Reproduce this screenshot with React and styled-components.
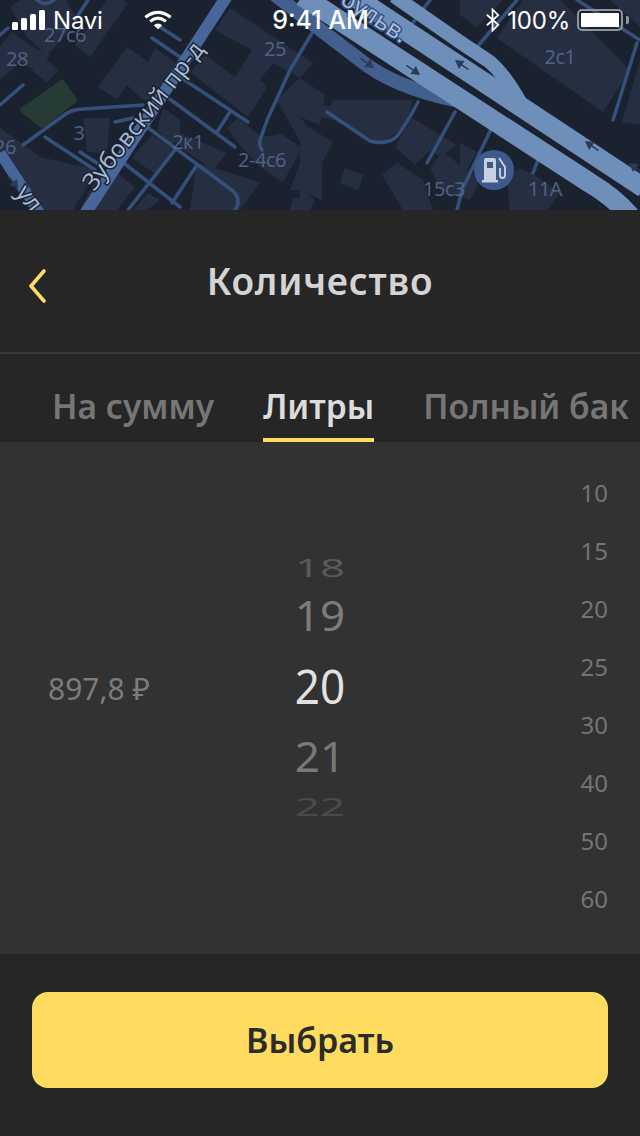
import React from "react";
import styled, { createGlobalStyle } from "styled-components";

const GlobalStyle = createGlobalStyle`
  html, body {
    margin: 0;
    padding: 0;
    background: #262626;
    font-family: "Noto Sans", "Open Sans", sans-serif;
  }
  * { box-sizing: border-box; }
`;

const buildings = [
  "10,7 20,0 66,0 75,15 66,35 47,55 27,37",
  "75,45 90,57 128,3 123,0 107,0",
  "0,47 12,32 33,47 50,55 35,70 20,62 0,80",
  "32,70 45,58 58,70 47,83",
  "98,87 127,47 148,62 155,48 185,70 167,95 143,100 127,85 117,99",
  "230,8 313,63 300,78 273,63 260,80 267,87 248,117 190,72 205,55 235,77 252,50 215,30",
  "227,128 238,118 262,137 277,135 280,133 302,148 283,182 260,167 240,145",
  "277,100 300,78 325,95 320,125 300,117 322,145 322,200 300,190 290,190 305,150",
  "180,133 227,153 213,170 180,147",
  "197,163 260,182 240,210 190,210",
  "313,115 320,103 330,107 333,100 413,100 407,120 397,133 380,143 333,120",
  "300,122 333,142 317,173 300,163",
  "300,187 315,200 310,210 300,210",
  "345,168 363,175 358,190 340,183",
  "395,147 412,118 457,145 440,157 430,150 415,165",
  "382,175 397,163 423,180 433,210 403,210",
  "430,167 443,152 480,180 470,200 440,190",
  "460,143 477,152 465,173 460,170",
  "507,180 518,168 532,173 560,193 547,210 510,210",
  "497,38 523,0 560,0 630,70 603,112",
  "610,0 640,27 640,0",
  "640,60 640,125 622,122",
  "460,0 503,0 477,27 460,15",
  "83,118 110,118 107,153 87,152",
  "0,128 40,157 97,170 73,210 40,210 0,157",
  "132,158 152,135 175,150 157,175",
  "100,170 117,173 135,187 117,210 80,210",
  "133,210 148,193 160,200 147,210",
  "157,130 163,108 180,120 180,143 170,143",
  "293,197 313,200 307,210 290,210"
];

const minorRoads = [
  "M152 38 L180 57",
  "M160 27 L180 40",
  "M180 77 L248 122",
  "M167 97 L235 147",
  "M230 112 L217 132",
  "M147 127 L233 191 Q242 200 235 210",
  "M45 137 L95 170",
  "M80 152 L100 165",
  "M120 160 L180 207",
  "M175 150 L128 210",
  "M197 165 L172 203",
  "M23 145 L67 113 Q75 109 83 109 L143 105",
  "M115 122 L133 118",
  "M0 105 L23 85",
  "M0 35 L8 28",
  "M36 -1 Q45 8 55 -1",
  "M75 20 L88 0",
  "M312 33 L290 70 L268 118 L260 140 Q259 146 262 150",
  "M430 0 L410 27",
  "M517 0 L477 47",
  "M577 0 L640 40",
  "M637 43 L613 120",
  "M327 112 L370 141 Q385 145 395 138 Q402 132 418 102",
  "M427 163 L455 112",
  "M457 210 L462 190 L492 127",
  "M533 173 L540 155"
];

const arrows = [
  [367, 63, 35],
  [413, 70, 35],
  [462, 65, 215],
  [592, 146, 215],
  [636, 168, 215],
  [13, 182, 50]
];

const labels = [
  ["27с6", 65, 42],
  ["28", 17, 66],
  ["26", 5, 154],
  ["3", 79, 140],
  ["2к1", 188, 149],
  ["2-4с6", 262, 167],
  ["25", 275, 56],
  ["2с1", 560, 64],
  ["15с3", 444, 196],
  ["11А", 545, 196]
];

function MapDrawing() {
  return (
    <MapSvg viewBox="0 0 640 210">
      <rect width="640" height="210" fill="#1b222f" />
      {buildings.map((p) => (
        <polygon key={p} points={p} fill="#262f42" />
      ))}
      <path d="M62 83 L74 100 L42 125 L23 110 Z" fill="#263a36" stroke="#263a36" strokeWidth="6" strokeLinejoin="round" />
      <g fill="none" stroke="#36507c" strokeWidth="3.5" strokeLinecap="round" strokeLinejoin="round">
        {minorRoads.map((d) => (
          <path key={d} d={d} />
        ))}
      </g>
      <path d="M227 -4 L85 214" stroke="#476699" strokeWidth="12" fill="none" />
      <path d="M0 153 L40 214" stroke="#476699" strokeWidth="11" fill="none" />
      <path d="M275 -5 L368 66 Q405 92 475 104" stroke="#425f8f" strokeWidth="14" fill="none" />
      <g fill="none" stroke="#6f8fbb" strokeLinejoin="round">
        <path d="M302 -4 L590 183 Q615 198 630 216" strokeWidth="20" />
        <path d="M353 -4 L644 188" strokeWidth="20" />
        <path d="M394 -4 L460 42 L490 62 Q505 75 520 102" strokeWidth="14" />
      </g>
      {arrows.map(([x, y, a]) => (
        <g key={x} transform={`translate(${x} ${y}) rotate(${a})`} fill="none" stroke="#2b3b58" strokeWidth="1.6">
          <path d="M-8 0 H6" />
          <path d="M1 -3.5 L7 0 L1 3.5 Z" fill="#2b3b58" />
        </g>
      ))}
      {labels.map(([t, x, y]) => (
        <MapLabel key={t} x={x} y={y} textAnchor="middle">
          {t}
        </MapLabel>
      ))}
      <StreetLabel transform="translate(94 192) rotate(-52)">Зубовский пр-д</StreetLabel>
      <StreetLabel transform="translate(15 193) rotate(52)">ул</StreetLabel>
      <StreetLabel $halo="#34507f" transform="translate(339 3) rotate(33)">бульв.</StreetLabel>
      <circle cx="494" cy="170" r="20" fill="#3e5a8c" />
      <path d="M484 160 Q484 158 486 158 H494 Q496 158 496 160 V180 H498 V182.5 H482 V180 H484 Z M487 162 V168 H493 V162 Z" fill="#c7cfe0" fillRule="evenodd" />
      <path d="M499 158 L505 167 V175 Q505 178 502.5 178 Q500 178 500 175 V168" fill="none" stroke="#c7cfe0" strokeWidth="1.9" />
    </MapSvg>
  );
}

function SignalIcon() {
  return (
    <svg width="34" height="20" viewBox="0 0 34 20" fill="#fff">
      <rect x="0" y="12" width="6" height="8" rx="1.5" />
      <rect x="9" y="8" width="6" height="12" rx="1.5" />
      <rect x="18" y="4" width="6" height="16" rx="1.5" />
      <rect x="27" y="0" width="6" height="20" rx="1.5" />
    </svg>
  );
}

function WifiIcon() {
  return (
    <svg width="28" height="20" viewBox="0 0 30 21" fill="none" stroke="#fff" strokeWidth="3.4">
      <path d="M1.5 7.5 Q15 -3 28.5 7.5" />
      <path d="M6.5 12 Q15 5 23.5 12" />
      <path d="M15 20.5 L10.5 16 Q15 12.5 19.5 16 Z" fill="#fff" stroke="none" />
    </svg>
  );
}

function BluetoothIcon() {
  return (
    <svg width="14" height="24" viewBox="0 0 16 26" fill="none" stroke="#fff" strokeWidth="2">
      <path d="M1 7 L14 18.5 L7.5 25 V1 L14 7.5 L1 19" />
    </svg>
  );
}

function Chevron() {
  return (
    <svg width="20" height="34" viewBox="0 0 20 34" fill="none" stroke="#ffdb60" strokeWidth="3.6" strokeLinecap="round" strokeLinejoin="round">
      <path d="M16 2 L3 17 L16 32" />
    </svg>
  );
}

const wheelRows = [
  { value: 18, height: 26, scale: 0.56, color: "#5a5a5a" },
  { value: 19, height: 70, scale: 0.95, color: "#7c7c7c" },
  { value: 20, height: 72, scale: 1.08, color: "#e2e2e2" },
  { value: 21, height: 68, scale: 0.95, color: "#797979" },
  { value: 22, height: 32, scale: 0.56, color: "#4a4a4a" }
];

const presets = [10, 15, 20, 25, 30, 40, 50, 60];

export default function App() {
  return (
    <Screen>
      <GlobalStyle />
      <MapArea>
        <MapDrawing />
        <StatusBar>
          <StatusGroup>
            <SignalIcon />
            <StatusText>Navi</StatusText>
            <WifiSlot>
              <WifiIcon />
            </WifiSlot>
          </StatusGroup>
          <StatusTime>9:41 AM</StatusTime>
          <StatusRight>
            <BluetoothIcon />
            <StatusText>100%</StatusText>
            <Battery>
              <BatteryFill />
            </Battery>
            <BatteryNub />
          </StatusRight>
        </StatusBar>
      </MapArea>
      <Header>
        <BackButton>
          <Chevron />
        </BackButton>
        <Title>Количество</Title>
      </Header>
      <Tabs>
        <Tab>На сумму</Tab>
        <Tab $active>Литры</Tab>
        <Tab>Полный бак</Tab>
      </Tabs>
      <Picker>
        <Price>897,8 ₽</Price>
        <Wheel>
          {wheelRows.map((row) => (
            <WheelRow key={row.value} $height={row.height}>
              <WheelValue $scale={row.scale} $color={row.color}>
                {row.value}
              </WheelValue>
            </WheelRow>
          ))}
        </Wheel>
        <Presets>
          {presets.map((p) => (
            <Preset key={p}>{p}</Preset>
          ))}
        </Presets>
      </Picker>
      <Footer>
        <SelectButton>Выбрать</SelectButton>
      </Footer>
    </Screen>
  );
}

const Screen = styled.div`
  width: 640px;
  height: 1136px;
  overflow: hidden;
  background: #262626;
  display: flex;
  flex-direction: column;
`;

const MapArea = styled.div`
  position: relative;
  height: 210px;
  flex: none;
  overflow: hidden;
`;

const MapSvg = styled.svg`
  display: block;
  width: 640px;
  height: 210px;
`;

const MapLabel = styled.text`
  font-family: "Open Sans", sans-serif;
  font-size: 20px;
  letter-spacing: -0.5px;
  fill: #4f6488;
`;

const StreetLabel = styled.text`
  font-family: "Open Sans", sans-serif;
  font-size: 24px;
  fill: #a9bedb;
  stroke: ${(p) => p.$halo || "#1b222f"};
  stroke-width: 3px;
  paint-order: stroke;
`;

const StatusBar = styled.div`
  position: absolute;
  top: 0;
  left: 0;
  right: 0;
  height: 40px;
  padding: 0 11px 0 12px;
  display: grid;
  grid-template-columns: 1fr auto 1fr;
  align-items: center;
  color: #fff;
`;

const StatusGroup = styled.div`
  display: flex;
  align-items: center;
  gap: 7px;
`;

const WifiSlot = styled.div`
  display: flex;
  margin-left: 34px;
`;

const StatusText = styled.span`
  font-family: "Inter", "Roboto", sans-serif;
  font-size: 24px;
  font-weight: 400;
  letter-spacing: -0.2px;
`;

const StatusTime = styled.span`
  font-family: "Inter", "Roboto", sans-serif;
  font-size: 25px;
  font-weight: 500;
`;

const StatusRight = styled.div`
  display: flex;
  align-items: center;
  justify-content: flex-end;
  gap: 7px;
`;

const Battery = styled.div`
  width: 46px;
  height: 22px;
  border: 2px solid #8d949e;
  border-radius: 5px;
  padding: 2px;
  display: flex;
`;

const BatteryFill = styled.div`
  flex: 1;
  background: #fff;
  border-radius: 1px;
`;

const BatteryNub = styled.div`
  width: 3px;
  height: 8px;
  margin-left: -4px;
  background: #8d949e;
  border-radius: 0 2px 2px 0;
`;

const Header = styled.div`
  height: 144px;
  flex: none;
  display: flex;
  align-items: center;
  justify-content: center;
  position: relative;
  border-bottom: 2px solid #3a3a3a;
`;

const BackButton = styled.div`
  position: absolute;
  left: 28px;
  top: 59px;
  display: flex;
`;

const Title = styled.h1`
  margin: 0 0 2px;
  font-size: 37px;
  font-weight: 600;
  letter-spacing: 0.8px;
  color: #d4d4d4;
`;

const Tabs = styled.div`
  height: 88px;
  flex: none;
  display: flex;
  gap: 49px;
  padding-left: 52px;
`;

const Tab = styled.div`
  height: 88px;
  line-height: 104px;
  font-size: 33.6px;
  font-weight: 600;
  white-space: nowrap;
  color: ${(p) => (p.$active ? "#dcdcdc" : "#767676")};
  border-bottom: 4px solid ${(p) => (p.$active ? "#ffdb60" : "transparent")};
`;

const Picker = styled.div`
  height: 512px;
  flex: none;
  background: #323232;
  display: grid;
  grid-template-columns: 1fr auto 1fr;
  align-items: center;
  padding: 0 32px;
`;

const Price = styled.div`
  margin: 0 0 20px 16px;
  font-size: 30px;
  color: #7c7c7c;
`;

const Wheel = styled.div`
  margin-bottom: 20px;
  display: flex;
  flex-direction: column;
  align-items: center;
`;

const WheelRow = styled.div`
  height: ${(p) => p.$height}px;
  display: flex;
  align-items: center;
  overflow: hidden;
`;

const WheelValue = styled.span`
  font-size: 44px;
  line-height: 1;
  color: ${(p) => p.$color};
  transform: scaleY(${(p) => p.$scale});
`;

const Presets = styled.div`
  justify-self: end;
  margin-bottom: 4px;
  display: flex;
  flex-direction: column;
  gap: 24px;
  align-items: center;
`;

const Preset = styled.div`
  height: 34px;
  line-height: 34px;
  font-size: 24px;
  color: #747474;
`;

const Footer = styled.div`
  flex: 1;
  padding: 38px 32px 0;
`;

const SelectButton = styled.div`
  height: 96px;
  border-radius: 16px;
  background: #ffdb60;
  color: #2b2b2b;
  font-size: 34px;
  font-weight: 600;
  display: flex;
  align-items: center;
  justify-content: center;
`;
